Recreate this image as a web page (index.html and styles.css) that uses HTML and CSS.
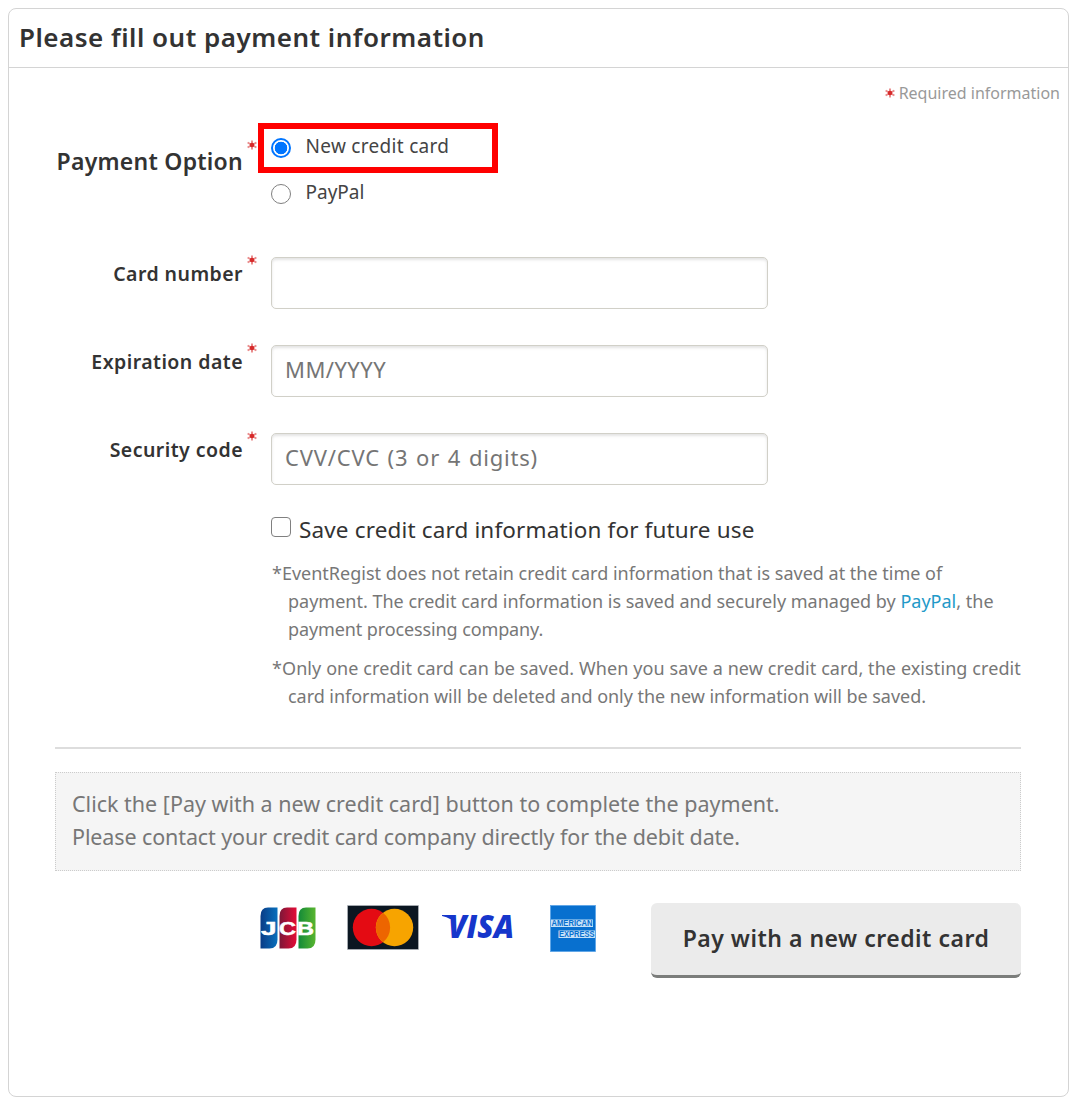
FILE: index.html
```html
<!DOCTYPE html>
<html lang="en">
<head>
<meta charset="utf-8">
<title>Payment information</title>
<link rel="stylesheet" href="styles.css">
</head>
<body>
<svg class="defs" width="0" height="0">
  <defs>
    <symbol id="star" viewBox="0 0 10 10">
      <path d="M5 .4V9.600M.6 2.500L9.400 7.500M9.400 2.500L.6 7.500" stroke="#e98a8a" stroke-width="1.900" fill="none"/>
      <circle cx="5" cy="5" r="2.300" fill="#d62a2a"/>
    </symbol>
  </defs>
</svg>
<main class="panel">
  <h1 class="title"><span>Please fill out payment information</span></h1>
  <p class="required"><svg class="star"><use href="#star"/></svg><span>Required information</span></p>
  <form class="form">
    <div class="row options">
      <div class="label label-large"><span>Payment Option</span><svg class="star"><use href="#star"/></svg></div>
      <div class="choices">
        <label class="choice highlighted"><input class="radio" type="radio" name="method" checked><span class="wide">New credit card</span></label>
        <label class="choice"><input class="radio" type="radio" name="method"><span>PayPal</span></label>
      </div>
    </div>
    <div class="row field">
      <label class="label" for="number"><span>Card number</span><svg class="star"><use href="#star"/></svg></label>
      <input class="input" id="number" type="text">
    </div>
    <div class="row field">
      <label class="label" for="expiry"><span>Expiration date</span><svg class="star"><use href="#star"/></svg></label>
      <input class="input input-expiry" id="expiry" type="text" placeholder="MM/YYYY">
    </div>
    <div class="row field">
      <label class="label" for="code"><span>Security code</span><svg class="star"><use href="#star"/></svg></label>
      <input class="input input-code" id="code" type="text" placeholder="CVV/CVC (3 or 4 digits)">
    </div>
    <div class="save">
      <label class="save-choice"><input class="checkbox" type="checkbox"><span>Save credit card information for future use</span></label>
      <p class="note">*EventRegist does not retain credit card information that is saved at the time of<br>payment. The credit card information is saved and securely managed by <a class="link" href="#">PayPal</a>, the<br><span class="tight">payment processing company.</span></p>
      <p class="note"><span class="loose">*Only one credit card can be saved. When you save a new credit card, the existing credit</span><br><span class="snug">card information will be deleted and only the new information will be saved.</span></p>
    </div>
    <hr class="rule">
    <p class="message">Click the [Pay with a new credit card] button to complete the payment.<br><span class="tight">Please contact your credit card company directly for the debit date.</span></p>
    <div class="footer">
      <div class="brands">
        <svg class="jcb" viewBox="0 0 56 42" role="img" aria-label="JCB">
          <defs>
            <linearGradient id="blue"><stop offset="0" stop-color="#0a3c86"/><stop offset="1" stop-color="#0870bd"/></linearGradient>
            <linearGradient id="red"><stop offset="0" stop-color="#7c1738"/><stop offset="1" stop-color="#e30c36"/></linearGradient>
            <linearGradient id="green"><stop offset="0" stop-color="#138a38"/><stop offset="1" stop-color="#58b52f"/></linearGradient>
          </defs>
          <path d="M8 .5h9.500v32q0 9-8 9H.5V9q0-8.500 7.500-8.500z" fill="url(#blue)"/>
          <path d="M27 .5h9.500v32q0 9-8 9h-9V9q0-8.500 7.500-8.500z" fill="url(#red)"/>
          <path d="M46 .5h9.500v32q0 9-8 9h-9V9q0-8.500 7.500-8.500z" fill="url(#green)"/>
          <g class="jcb-text"><text x="1" y="27.500" textLength="15.500" lengthAdjust="spacingAndGlyphs">J</text><text x="19" y="27.500" textLength="17" lengthAdjust="spacingAndGlyphs">C</text><text x="37" y="27.500" textLength="17" lengthAdjust="spacingAndGlyphs">B</text></g>
        </svg>
        <svg class="mastercard" viewBox="0 0 72 45" role="img" aria-label="Mastercard">
          <rect x=".5" y=".5" width="71" height="44" fill="#0b1621" stroke="#b9bfc5" stroke-width=".6"/>
          <circle cx="24.500" cy="22.500" r="18.700" fill="#e40b13"/>
          <circle cx="47.500" cy="22.500" r="18.700" fill="#f7a400"/>
          <path d="M36 7.800a18.700 18.700 0 0 1 0 29.400a18.700 18.700 0 0 1 0-29.400z" fill="#ed6500"/>
        </svg>
        <svg class="visa" viewBox="0 0 72 26" role="img" aria-label="Visa">
          <path d="M0 1h13v4H8Q5 3 0 2z" fill="#1636cb"/>
          <text class="visa-text" x="6" y="24.300" textLength="66" lengthAdjust="spacingAndGlyphs">VISA</text>
        </svg>
        <svg class="amex" viewBox="0 0 46 47" role="img" aria-label="American Express">
          <rect x=".5" y=".5" width="45" height="46" fill="#0870cf" stroke="#5aa4e6" stroke-width=".8"/>
          <path d="M1 14.500h42v7.500H1zM8.500 25.500h36.500v7.500H8.500z" fill="#c4e1f8"/>
          <g class="amex-text"><text x="1.500" y="21.200" textLength="41" lengthAdjust="spacingAndGlyphs">AMERICAN</text><text x="9" y="32.200" textLength="35.500" lengthAdjust="spacingAndGlyphs">EXPRESS</text></g>
        </svg>
      </div>
      <button class="pay" type="button"><span>Pay with a new credit card</span></button>
    </div>
  </form>
</main>
</body>
</html>
```
FILE: styles.css
```css
*, *::after { box-sizing: border-box; }
body {
  margin: 0;
  padding: 8px 7px 6px 8px;
  background: #fff;
  color: #333;
  font-family: "Noto Sans", "Open Sans", sans-serif;
}
h1, p { margin: 0; }
.defs { position: absolute; }
.panel {
  height: 1089px;
  border: 1px solid #d4d4d4;
  border-radius: 8px;
}
.title {
  height: 59px;
  padding: 0 10px;
  border-bottom: 1px solid #d4d4d4;
  font-size: 26px;
  font-weight: 600;
  line-height: 56px;
  letter-spacing: .5px;
}
.star { width: 10px; height: 10px; flex: none; }
.required {
  display: flex;
  justify-content: flex-end;
  align-items: center;
  gap: 4px;
  height: 50px;
  padding-right: 8px;
  color: #999;
  font-size: 16px;
}
.form { padding: 0 47px 0 46px; }
.row { display: flex; }
.label {
  display: flex;
  justify-content: flex-end;
  gap: 4px;
  width: 202px;
  margin-right: 14px;
  font-size: 19.500px;
  font-weight: 600;
  line-height: 34px;
  letter-spacing: .45px;
}
.label .star { margin-top: -2px; }
.options { height: 138.500px; }
.label-large { padding-top: 25px; font-size: 23px; line-height: 36px; letter-spacing: .25px; }
.label-large .star { margin-top: -3px; }
.choices { padding-top: 6px; }
.choice {
  position: relative;
  display: flex;
  align-items: center;
  gap: 14.500px;
  height: 46px;
  color: #444;
  font-size: 19px;
  line-height: 44px;
}
.choice span { margin-top: -2px; }
.wide { letter-spacing: .3px; }
.highlighted::after {
  content: "";
  position: absolute;
  left: -13px;
  top: -1px;
  width: 240px;
  height: 50px;
  border: 6px solid #f00;
}
.radio {
  appearance: none;
  width: 20px;
  height: 20px;
  margin: 1px 0 0;
  border: 1.500px solid #808080;
  border-radius: 50%;
}
.radio:checked {
  border: 2px solid #0075ff;
  background: radial-gradient(circle, #0075ff 6px, #fff 6.600px);
}
.field { height: 88.400px; }
.input {
  width: 497px;
  height: 52px;
  padding: 0 13px 4px;
  border: 1px solid #d1d0c8;
  border-radius: 5px;
  box-shadow: inset 0 2px 3px #e4e4e4;
  font-family: inherit;
  font-size: 22px;
  outline: 0;
}
.input-expiry { letter-spacing: .45px; }
.input-code { letter-spacing: .8px; word-spacing: 1.200px; }
.input::placeholder { color: #757575; }
.save { padding-left: 216px; }
.save-choice {
  display: flex;
  gap: 8px;
  height: 40px;
  margin-top: -11.500px;
  font-size: 22.500px;
  line-height: 40px;
  letter-spacing: .15px;
}
.checkbox {
  appearance: none;
  width: 20px;
  height: 20px;
  margin: 7px 0 0;
  border: 1.500px solid #808080;
  border-radius: 4px;
}
.note {
  margin: 9px -20px 11px 0;
  padding-left: 17px;
  color: #777;
  font-size: 18px;
  line-height: 28px;
  text-indent: -16px;
  white-space: nowrap;
}
.tight { letter-spacing: -.11px; }
.snug { letter-spacing: -.04px; }
.loose { letter-spacing: .09px; }
.link { color: #2299c8; text-decoration: none; }
.rule { margin: 37px 0 23px; border: 0; border-top: 2px solid #ddd; }
.message {
  height: 99px;
  padding: 15px 16px;
  border: 1px dotted #ccc;
  background: #f5f5f5;
  color: #777;
  font-size: 21.500px;
  line-height: 32.500px;
  white-space: nowrap;
}
.footer { display: flex; justify-content: flex-end; margin-top: 32px; }
.brands { display: flex; width: 391px; }
.brands svg { overflow: visible; }
.jcb { width: 56px; height: 42px; margin: 4px 31px 0 0; }
.mastercard { width: 72px; height: 45px; margin: 2px 23px 0 0; }
.visa { width: 72px; height: 26px; margin: 11px 36px 0 0; }
.amex { width: 46px; height: 47px; margin-top: 2px; }
.jcb-text { fill: #fff; stroke: #fff; stroke-width: .5px; font: bold 18px "Liberation Sans", sans-serif; }
.visa-text { fill: #1636cb; font: italic 800 32px "Open Sans", sans-serif; }
.amex-text { fill: #0870cf; font: bold 8.500px "Liberation Sans", sans-serif; }
.pay {
  width: 370px;
  height: 75px;
  padding: 0 0 2px;
  border: 0;
  border-bottom: 3px solid #7b7d7b;
  border-radius: 6px;
  background: #ebebeb;
  color: #333;
  font-family: inherit;
  font-size: 23px;
  font-weight: 600;
  letter-spacing: .5px;
}
```
